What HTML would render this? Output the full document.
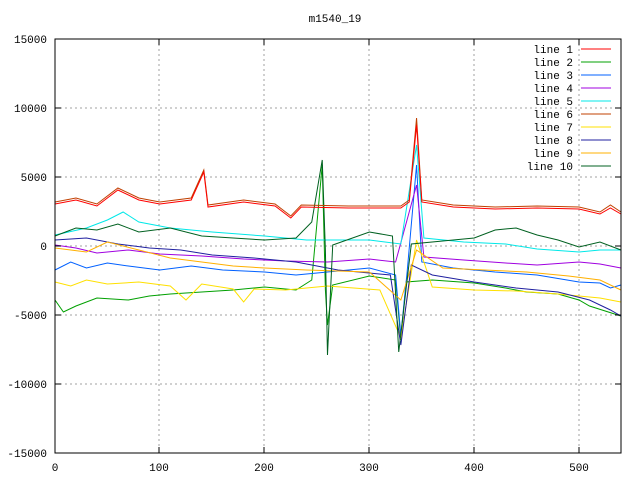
<!DOCTYPE html>
<html><head><style>body{margin:0;background:#fff}svg{display:block}text{font-family:"Liberation Mono",monospace;font-size:11px}</style></head><body>
<svg width="640" height="480" xmlns="http://www.w3.org/2000/svg">
<g stroke="#a0a0a0" stroke-dasharray="2,3" fill="none">
<path d="M55 108H621M55 177H621M55 246H621M55 315H621M55 384H621"/>
<path d="M159 39V453M264 39V453M369 39V453M474 39V453M579 39V453"/>
</g>
<g fill="none" stroke-width="1" transform="translate(55,0) scale(1.048,1)">
<polyline vector-effect="non-scaling-stroke" stroke="#00a000" points="0,300 8,312 20,306 40,298 70,300 90,296 110,294 140,292 170,290 200,287 230,290 245,280 255,165 258,290 260,325 265,285 300,276 325,280 330,340 335,282 360,280 400,283 430,288 450,292 480,294 500,300 510,306 540,316"/>
<polyline vector-effect="non-scaling-stroke" stroke="#0060ff" points="0,270 15,262 30,268 50,263 70,266 100,270 130,266 160,270 200,272 230,275 260,272 300,268 325,275 330,335 336,272 345,165 350,262 380,268 420,272 460,275 500,282 520,283 530,288 540,285"/>
<polyline vector-effect="non-scaling-stroke" stroke="#a000e0" points="0,245 20,248 40,253 70,250 100,254 140,256 180,259 220,261 260,262 300,259 325,262 345,185 352,257 390,260 430,263 460,265 500,262 520,264 540,268"/>
<polyline vector-effect="non-scaling-stroke" stroke="#00e8e8" points="0,235 30,228 50,220 65,212 80,222 110,228 150,232 200,236 240,240 300,240 330,244 345,145 352,238 390,242 430,244 460,249 500,252 520,250 540,250"/>
<polyline vector-effect="non-scaling-stroke" stroke="#ffe000" points="0,282 15,286 30,280 50,284 80,282 110,286 125,300 140,284 170,289 180,302 190,289 220,290 260,286 310,290 330,338 345,240 360,287 400,290 440,291 480,294 520,298 540,302"/>
<polyline vector-effect="non-scaling-stroke" stroke="#2020a0" points="0,240 30,238 60,244 90,248 120,250 150,255 190,258 230,262 270,270 320,275 330,345 340,265 360,275 400,282 440,288 480,292 510,300 530,310 540,316"/>
<polyline vector-effect="non-scaling-stroke" stroke="#ffb000" points="0,248 30,252 50,242 80,250 110,258 140,262 170,266 200,268 240,270 300,272 330,300 345,250 370,268 410,270 450,272 490,276 520,280 540,290"/>
<polyline vector-effect="non-scaling-stroke" stroke="#006020" points="0,236 20,228 40,230 60,224 80,232 110,228 140,236 170,238 200,240 230,238 245,222 255,160 258,250 260,355 265,245 300,232 322,236 328,352 340,244 380,240 400,238 420,230 440,228 460,235 480,240 500,247 520,242 540,250"/>
<polyline vector-effect="non-scaling-stroke" stroke="#c04000" points="0,202 20,198 40,204 60,188 80,198 100,202 130,198 142,170 146,205 180,200 210,204 225,216 235,205 280,206 330,206 338,200 345,118 350,200 380,205 420,207 460,206 500,207 520,212 530,205 540,212"/>
<polyline vector-effect="non-scaling-stroke" stroke="#ff0000" points="0,204 20,200 40,206 60,190 80,200 100,204 130,200 142,172 146,207 180,202 210,206 225,218 235,207 280,208 330,208 338,202 345,125 350,202 380,207 420,209 460,208 500,209 520,214 530,208 540,214"/>
</g>
<rect x="55" y="39" width="566" height="414" fill="none" stroke="#000"/>
<g stroke="#000"><path d="M55 108h6M55 177h6M55 246h6M55 315h6M55 384h6M615 108h6M615 177h6M615 246h6M615 315h6M615 384h6M159 453v-6M264 453v-6M369 453v-6M474 453v-6M579 453v-6M159 39v6M264 39v6M369 39v6M474 39v6M579 39v6"/></g>
<g text-anchor="end">
<text x="47" y="43">15000</text><text x="47" y="112">10000</text><text x="47" y="181">5000</text><text x="47" y="250">0</text><text x="47" y="319">-5000</text><text x="47" y="388">-10000</text><text x="47" y="457">-15000</text>
</g>
<g text-anchor="middle">
<text x="55" y="471">0</text><text x="159" y="471">100</text><text x="264" y="471">200</text><text x="369" y="471">300</text><text x="474" y="471">400</text><text x="579" y="471">500</text>
<text x="335" y="22">m1540_19</text>
</g>
<g text-anchor="end">
<text x="573" y="53">line 1</text><text x="573" y="66">line 2</text><text x="573" y="79">line 3</text><text x="573" y="92">line 4</text><text x="573" y="105">line 5</text><text x="573" y="118">line 6</text><text x="573" y="131">line 7</text><text x="573" y="144">line 8</text><text x="573" y="157">line 9</text><text x="573" y="170">line 10</text>
</g>
<g stroke-width="1">
<path d="M581 49h30" stroke="#ff0000"/><path d="M581 62h30" stroke="#00a000"/><path d="M581 75h30" stroke="#0060ff"/><path d="M581 88h30" stroke="#a000e0"/><path d="M581 101h30" stroke="#00e8e8"/><path d="M581 114h30" stroke="#c04000"/><path d="M581 127h30" stroke="#ffe000"/><path d="M581 140h30" stroke="#2020a0"/><path d="M581 153h30" stroke="#ffb000"/><path d="M581 166h30" stroke="#006020"/>
</g>
</svg>
</body></html>
